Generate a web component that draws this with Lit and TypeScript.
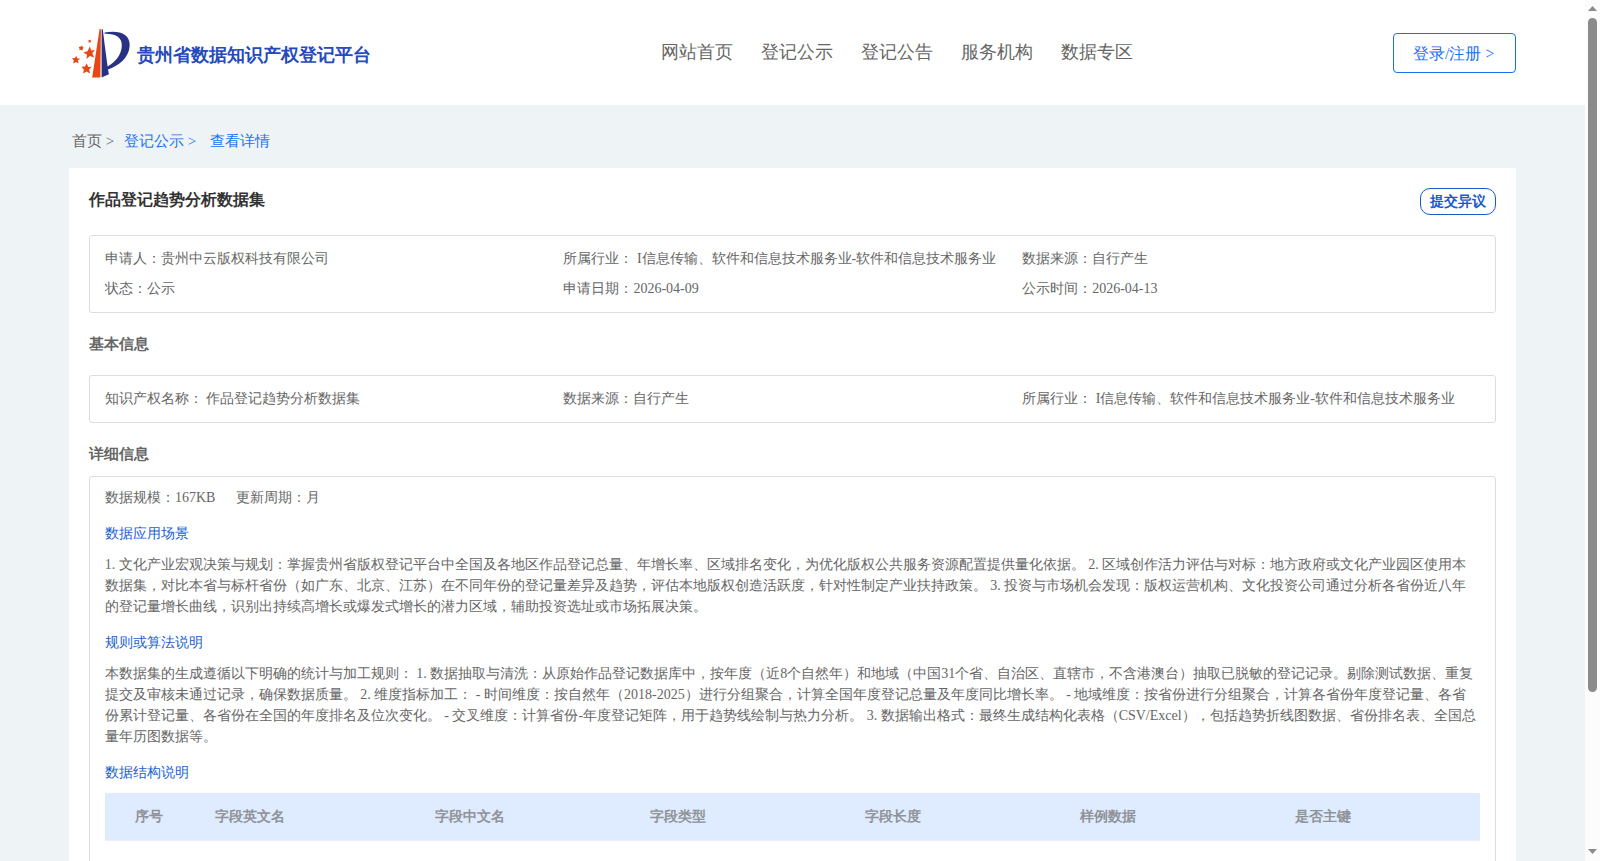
import { LitElement, html, css } from "lit";
import { customElement } from "lit/decorators.js";

const NAV = ["网站首页", "登记公示", "登记公告", "服务机构", "数据专区"];

const SUMMARY = [
  "申请人：贵州中云版权科技有限公司",
  "所属行业： I信息传输、软件和信息技术服务业-软件和信息技术服务业",
  "数据来源：自行产生",
  "状态：公示",
  "申请日期：2026-04-09",
  "公示时间：2026-04-13",
];

const BASIC = [
  "知识产权名称： 作品登记趋势分析数据集",
  "数据来源：自行产生",
  "所属行业： I信息传输、软件和信息技术服务业-软件和信息技术服务业",
];

const SCENE =
  "1. 文化产业宏观决策与规划：掌握贵州省版权登记平台中全国及各地区作品登记总量、年增长率、区域排名变化，为优化版权公共服务资源配置提供量化依据。 2. 区域创作活力评估与对标：地方政府或文化产业园区使用本数据集，对比本省与标杆省份（如广东、北京、江苏）在不同年份的登记量差异及趋势，评估本地版权创造活跃度，针对性制定产业扶持政策。 3. 投资与市场机会发现：版权运营机构、文化投资公司通过分析各省份近八年的登记量增长曲线，识别出持续高增长或爆发式增长的潜力区域，辅助投资选址或市场拓展决策。";

const RULES =
  "本数据集的生成遵循以下明确的统计与加工规则： 1. 数据抽取与清洗：从原始作品登记数据库中，按年度（近8个自然年）和地域（中国31个省、自治区、直辖市，不含港澳台）抽取已脱敏的登记记录。剔除测试数据、重复提交及审核未通过记录，确保数据质量。 2. 维度指标加工： - 时间维度：按自然年（2018-2025）进行分组聚合，计算全国年度登记总量及年度同比增长率。 - 地域维度：按省份进行分组聚合，计算各省份年度登记量、各省份累计登记量、各省份在全国的年度排名及位次变化。 - 交叉维度：计算省份-年度登记矩阵，用于趋势线绘制与热力分析。 3. 数据输出格式：最终生成结构化表格（CSV/Excel），包括趋势折线图数据、省份排名表、全国总量年历图数据等。";

const COLUMNS = ["序号", "字段英文名", "字段中文名", "字段类型", "字段长度", "样例数据", "是否主键"];

@customElement("app-root")
export class AppRoot extends LitElement {
  static styles = css`
    :host {
      display: flex;
      height: 861px;
      overflow: hidden;
      font-family: "Liberation Serif", serif;
      font-size: 14px;
      color: #666;
    }
    * { box-sizing: border-box; }
    .page { width: 1585px; height: 861px; overflow: hidden; background: #eef3f6; }
    .header {
      height: 105px;
      background: #fff;
      display: grid;
      grid-template-columns: 591.5px 1fr auto;
      padding: 0 69px;
      align-items: start;
    }
    .brand { display: flex; padding-top: 26px; }
    .logo { width: 68px; height: 54px; display: block; }
    .brand-name { font-size: 18px; font-weight: bold; line-height: 24px; padding-top: 17px; color: #254abb; }
    .nav { display: flex; gap: 28px; font-size: 18px; line-height: 24px; padding-top: 40px; }
    .login {
      margin-top: 33px;
      width: 123px;
      height: 40px;
      border: 1px solid #1a6ff0;
      border-radius: 4px;
      color: #1a73f5;
      font-size: 16px;
      line-height: 39px;
      padding-left: 19px;
      white-space: nowrap;
    }
    .crumbs { height: 63px; padding: 26px 0 0 72px; display: flex; font-size: 15px; line-height: 20px; white-space: pre; }
    .crumb-here { color: #1a73f5; }
    .crumb-mid { width: 86px; color: #1a73f5; }
    .crumb-first { width: 52px; }
    .card { margin: 0 69px; padding: 20px 20px 0; background: #fff; height: 800px; }
    .title-row { display: flex; justify-content: space-between; height: 47px; }
    .title { font-size: 16px; font-weight: bold; line-height: 24px; color: #333; }
    .object {
      width: 76px;
      height: 27px;
      border: 1px solid #1a5ac8;
      border-radius: 10px;
      color: #1a5ac8;
      font-weight: bold;
      line-height: 25px;
      text-align: center;
      text-indent: -1px;
    }
    .box { border: 1px solid #dcdddf; border-radius: 3px; padding: 8px 15px; }
    .grid {
      display: grid;
      grid-template-columns: 458.6px 458.8px 1fr;
      padding-left: 14.8px;
      line-height: 30px;
      white-space: nowrap;
    }
    .section { font-size: 15px; font-weight: bold; line-height: 62px; height: 62px; }
    .section-tight { height: 53px; }
    .detail { padding: 10px 15px; height: 500px; }
    .meta { display: flex; gap: 21px; line-height: 21px; }
    .sub { color: #1a5fd0; line-height: 21px; margin-top: 15px; }
    .text { line-height: 21px; margin-top: 10px; margin-left: -0.2px; }
    .thead {
      display: grid;
      grid-template-columns: 100px 220px repeat(4, 215px) 1fr;
      height: 48px;
      margin-top: 10px;
      background: #dfebfe;
      border-bottom: 1px solid #ebeef5;
      color: #909399;
      font-weight: bold;
      line-height: 47px;
    }
    .cell { padding-left: 10px; }
    .cell:first-child { padding-left: 29.7px; }
    .scroll { width: 15px; height: 861px; background: #fcfcfc; display: block; }
  `;

  private grid(items: string[]) {
    return html`<div class="box grid">${items.map((t) => html`<div>${t}</div>`)}</div>`;
  }

  render() {
    return html`
      <div class="page">
        <header class="header">
          <div class="brand">
            <svg class="logo" viewBox="69 26 68 54">
              <path fill="#e84714" d="M99.600 28.700Q100.900 28.700 100.900 30L100.400 77.500H92.200Z" />
              <path fill="#293184" d="M101.600 30Q102 28.500 102.800 29.500L104.700 45L107.600 66.500C115 62.500 121.600 55 121.800 45.500C122 37 115 33.500 104.600 33.800V32.600C118 30.200 130 33 129.700 45.500C129.200 58 118 66 108 69.500L108.900 74.300L101.600 77.500Z" />
              <g fill="#e84714">
                <path d="M89.700 46.500L91.200 50.400L94.800 50L92.300 53.200L94.200 57.600L89.900 55.900L86.500 59L87 54.700L83.400 52.300L87.600 51.300Z" />
                <path d="M86.700 63.200L88.200 66.900L91.700 66.800L89.100 69.500L90.200 73.500L86.600 71.600L83.200 73.500L83.800 69.500L81.500 66.800L85 66.600Z" />
                <path d="M76.300 55.700L77.200 58.400L80.200 58.500L77.900 60.500L78.600 63.400L75.900 61.900L73.200 63.400L73.800 60.300L72 58.200L75 58.100Z" />
                <path d="M82.400 45.500L82.600 47.200L83.900 47.700L82.700 48.700L82.600 50.500L81 49.800L79.300 50.200L79.600 48.400L78.600 46.900L80.400 46.800Z" />
                <path d="M90.200 39.600L90.500 40.600L91.500 41L90.600 41.700L90.400 42.700L89.400 42.200L88.300 42.500L88.600 41.300L88 40.400L89.300 40.300Z" />
              </g>
            </svg>
            <div class="brand-name">贵州省数据知识产权登记平台</div>
          </div>
          <nav class="nav">${NAV.map((n) => html`<span>${n}</span>`)}</nav>
          <div class="login">登录/注册 &gt;</div>
        </header>
        <div class="crumbs"><span class="crumb-first">首页 &gt;</span><span class="crumb-mid">登记公示 &gt;</span><span class="crumb-here">查看详情</span></div>
        <main class="card">
          <div class="title-row">
            <div class="title">作品登记趋势分析数据集</div>
            <div class="object">提交异议</div>
          </div>
          ${this.grid(SUMMARY)}
          <div class="section">基本信息</div>
          ${this.grid(BASIC)}
          <div class="section section-tight">详细信息</div>
          <div class="box detail">
            <div class="meta"><span>数据规模：167KB</span><span>更新周期：月</span></div>
            <div class="sub">数据应用场景</div>
            <div class="text">${SCENE}</div>
            <div class="sub">规则或算法说明</div>
            <div class="text">${RULES}</div>
            <div class="sub">数据结构说明</div>
            <div class="thead">${COLUMNS.map((c) => html`<div class="cell">${c}</div>`)}</div>
          </div>
        </main>
      </div>
      <svg class="scroll" viewBox="0 0 15 861">
        <g fill="#8b8b8b">
          <path d="M3 11L7.500 6L12 11Z" />
          <rect x="3" y="18" width="9" height="674" rx="4.500" />
          <path d="M3 849L7.500 854L12 849Z" />
        </g>
      </svg>
    `;
  }
}
